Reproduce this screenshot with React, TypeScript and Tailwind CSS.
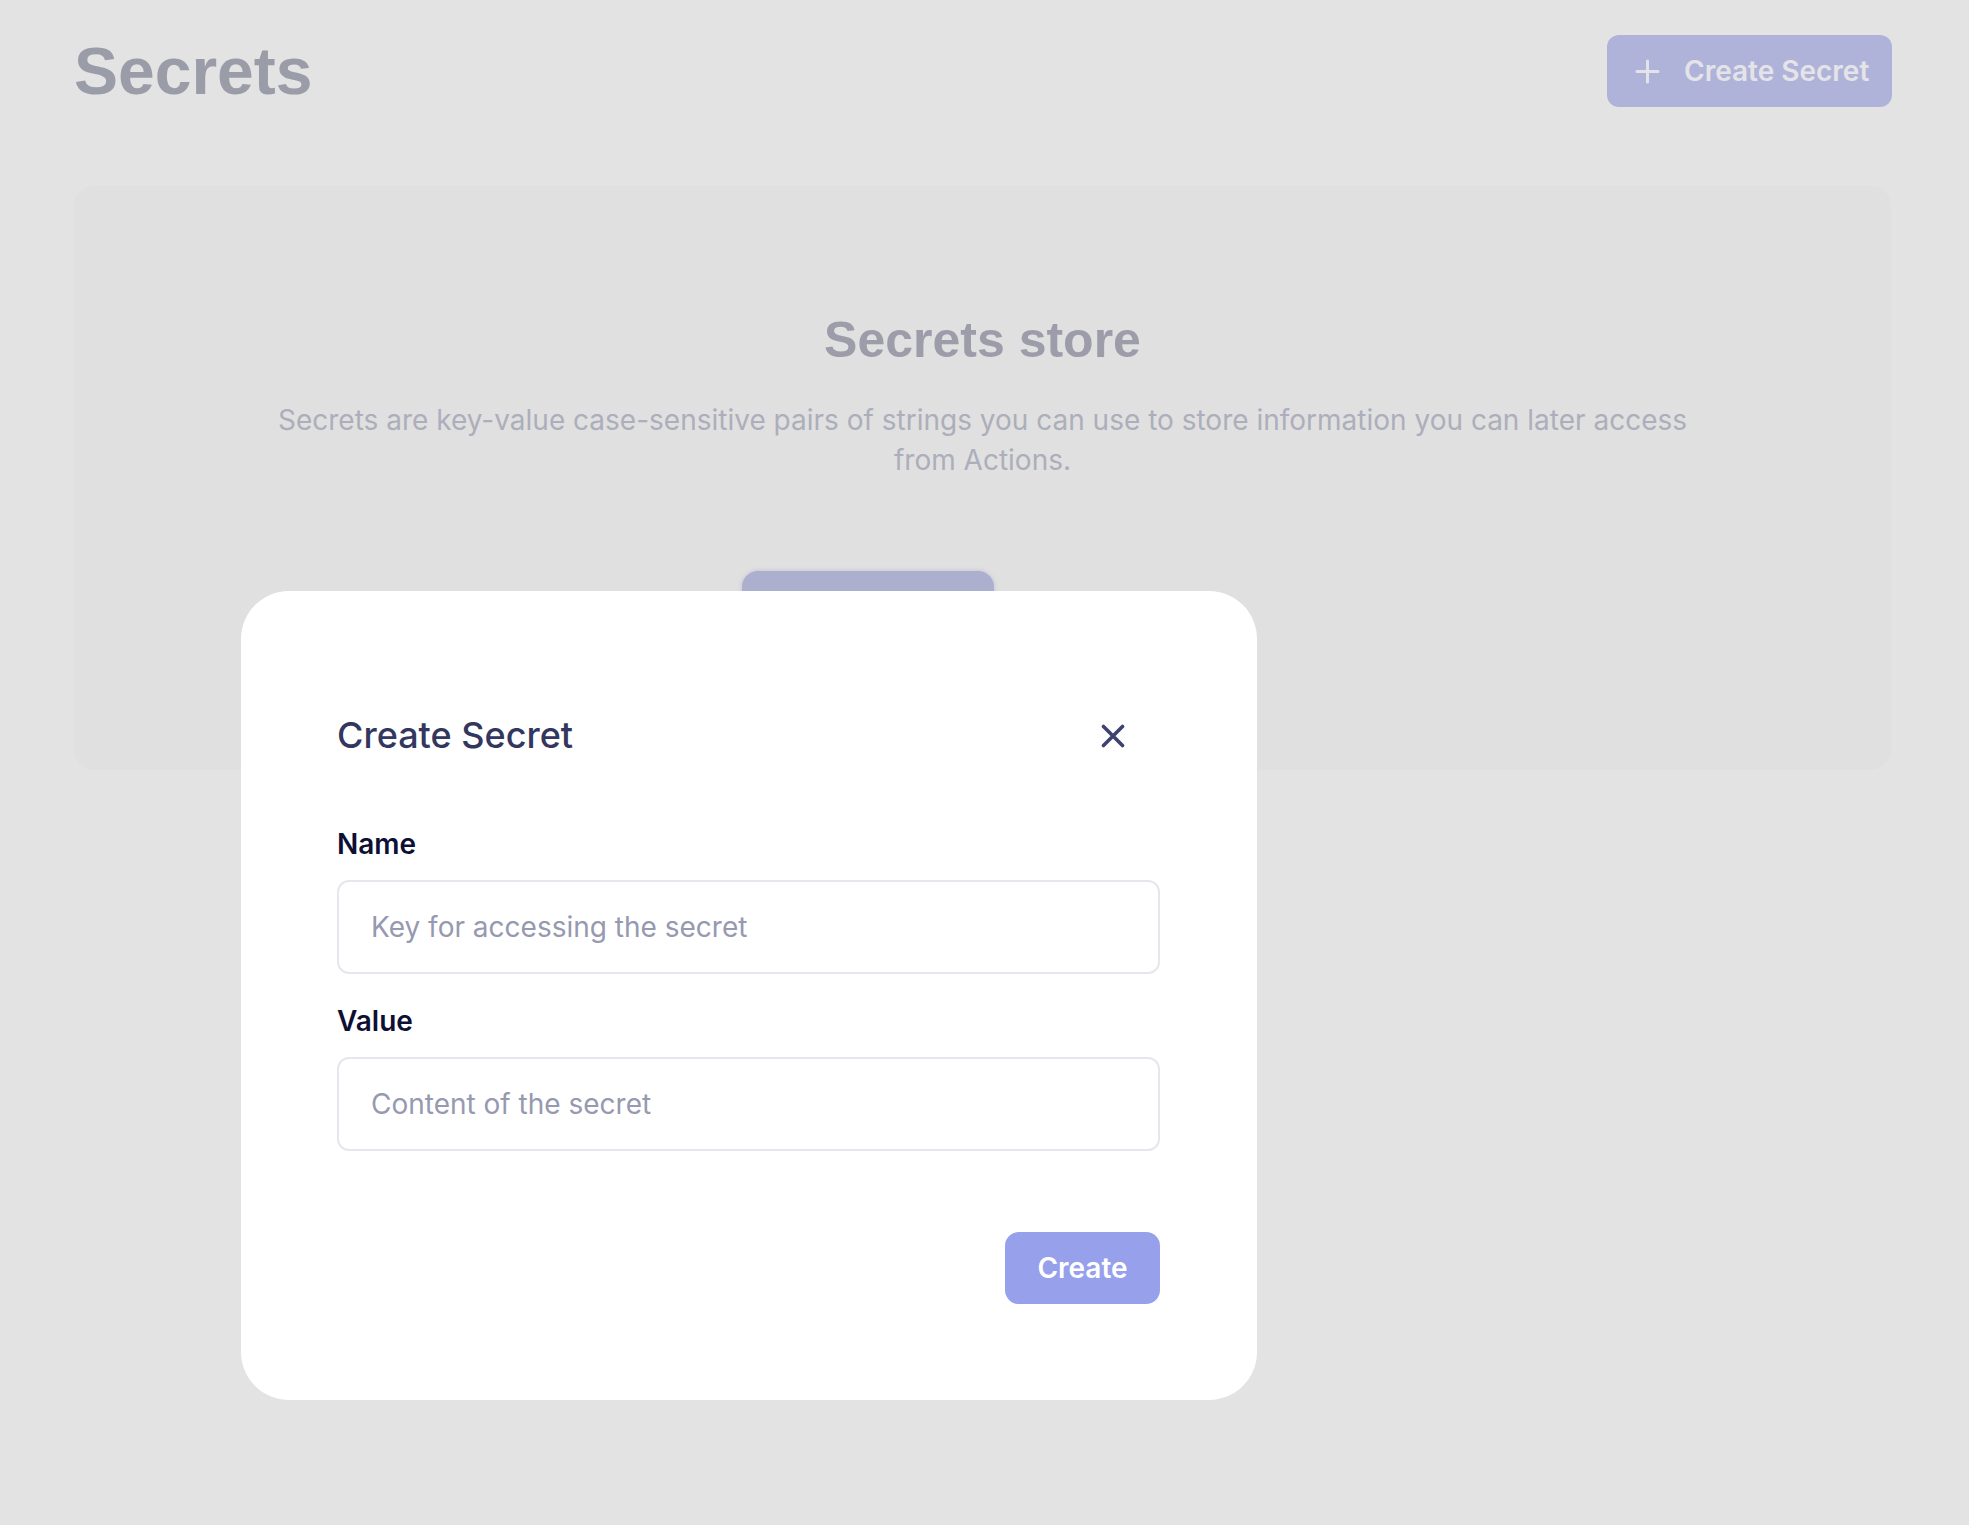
import React from "react";

const PlusIcon = () => (
  <svg width="25" height="25" viewBox="0 0 25 25" fill="none" stroke="currentColor" strokeWidth="3" strokeLinecap="round">
    <path d="M12.5 2v21M2 12.5h21" />
  </svg>
);

const CloseIcon = () => (
  <svg width="24" height="24" viewBox="0 0 24 24" fill="none" stroke="currentColor" strokeWidth="3.6" strokeLinecap="round">
    <path d="M2.5 2.5l19 19M21.5 2.5l-19 19" />
  </svg>
);

const Field = ({ label, placeholder, className }: { label: string; placeholder: string; className?: string }) => (
  <div className={className}>
    <label className="block text-[28px] leading-[40px] font-semibold text-[#0d0f35]">{label}</label>
    <input
      type="text"
      placeholder={placeholder}
      className="mt-[16px] block w-full h-[94px] rounded-[12px] border-2 border-[#e6e6ec] bg-white px-[32px] text-[28px] text-[#1c1d3a] placeholder:text-[#9699b0] outline-none"
    />
  </div>
);

const App = () => {
  return (
    <div className="relative w-full min-h-[1525px] bg-[#e3e3e3] font-['Inter',sans-serif] overflow-hidden">
      <header className="flex items-center justify-between pl-[74px] pr-[77px] pt-[35px]">
        <h1 className="font-['Liberation_Sans',Arial,sans-serif] text-[66px] leading-[72px] font-bold text-[#9a9ca8]">Secrets</h1>
        <button className="flex items-center gap-[24px] w-[285px] h-[72px] pl-[28px] rounded-[12px] bg-[#b0b3d9] text-[#e4e4e8]">
          <PlusIcon />
          <span className="text-[28px] font-semibold">Create Secret</span>
        </button>
      </header>

      <section className="mx-[74px] mr-[78px] mt-[79px] h-[584px] rounded-[20px] bg-[#e0e0e0] pt-[124px] flex flex-col items-center">
        <h2 className="font-['Liberation_Sans',Arial,sans-serif] text-[50px] leading-[60px] font-bold text-[#9c9da9]">Secrets store</h2>
        <p className="mt-[30px] max-w-[1430px] text-center text-[28px] leading-[40px] text-[#adaebb]">
          Secrets are key-value case-sensitive pairs of strings you can use to store information you can later access from Actions.
        </p>
        <div className="mt-[91px] flex">
          <button className="w-[252px] h-[72px] rounded-[16px] bg-[#acafcd] shadow-[0_0_4px_rgba(120,125,200,0.35)]" />
          <div className="w-[230px]" />
        </div>
      </section>

      <div className="absolute left-[241px] top-[591px] w-[1016px] rounded-[48px] bg-white pl-[96px] pr-[97px] pt-[120px] pb-[96px]">
        <div className="flex items-center justify-between">
          <h3 className="text-[36px] leading-[49px] font-medium text-[#33365e]">Create Secret</h3>
          <button className="mr-[35px] text-[#3d4270]">
            <CloseIcon />
          </button>
        </div>
        <Field className="mt-[64px]" label="Name" placeholder="Key for accessing the secret" />
        <Field className="mt-[27px]" label="Value" placeholder="Content of the secret" />
        <div className="mt-[81px] flex justify-end">
          <button className="w-[155px] h-[72px] rounded-[14px] bg-[#97a0ea] text-white text-[28px] font-semibold">Create</button>
        </div>
      </div>
    </div>
  );
};

export default App;
